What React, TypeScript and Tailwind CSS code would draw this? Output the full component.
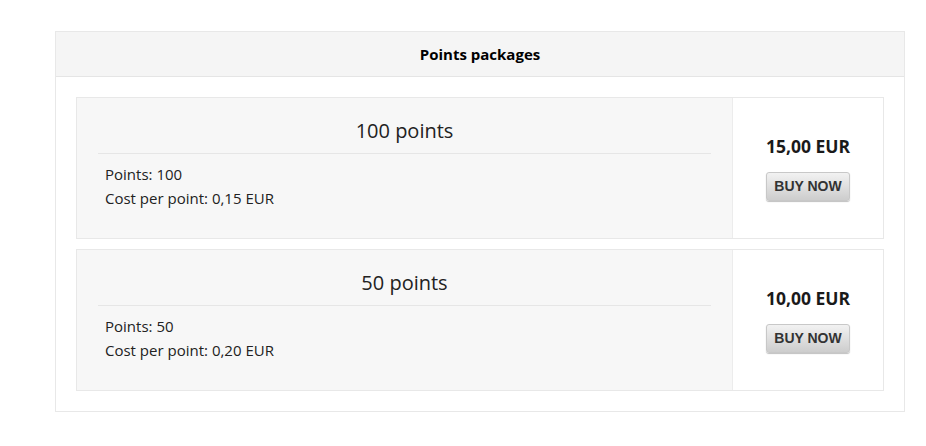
import React from "react";

const packages = [
  { title: "100 points", points: 100, cpp: "0,15 EUR", price: "15,00 EUR" },
  { title: "50 points", points: 50, cpp: "0,20 EUR", price: "10,00 EUR" },
];

export default function App() {
  return (
    <div className="w-[926px] h-[446px] bg-white pt-[31px] pl-[55px]" style={{ fontFamily: '"Open Sans", "Noto Sans", sans-serif' }}>
      <div className="w-[850px] border border-[#e8e8e8] bg-white">
        <div className="h-[45px] bg-[#f5f5f5] border-b border-[#e5e5e5] flex items-center justify-center text-[15px] font-bold text-black">
          Points packages
        </div>
        <div className="px-[20px] pt-[20px] pb-[20px] flex flex-col gap-[10px]">
          {packages.map((p) => (
            <div key={p.title} className="flex h-[142px] border border-[#e8e8e8]">
              <div className="w-[656px] bg-[#f7f7f7] border-r border-[#ececec] px-[21px] pt-[19px]">
                <div className="text-center text-[20px] leading-[28px] text-[#222] pb-[8px] border-b border-[#e6e6e6]">
                  {p.title}
                </div>
                <div className="pl-[7px] pt-[8px] text-[15px] leading-[24px] text-[#222]">
                  <div>Points: {p.points}</div>
                  <div>Cost per point: {p.cpp}</div>
                </div>
              </div>
              <div className="flex-1 bg-white flex flex-col items-center pt-[36px]">
                <div className="text-[17.5px] font-bold leading-[24px] text-[#1a1a1a]">{p.price}</div>
                <button
                  className="mt-[14px] w-[84px] h-[29px] rounded-[3px] border border-[#c8c8c8] bg-gradient-to-b from-[#f2f2f2] to-[#cdcdcd] shadow-[0_1px_1px_rgba(0,0,0,0.25)] text-[14px] font-bold text-[#333] flex items-center justify-center"
                  style={{ fontFamily: '"Liberation Sans", Arial, sans-serif' }}
                >
                  BUY NOW
                </button>
              </div>
            </div>
          ))}
        </div>
      </div>
    </div>
  );
}
